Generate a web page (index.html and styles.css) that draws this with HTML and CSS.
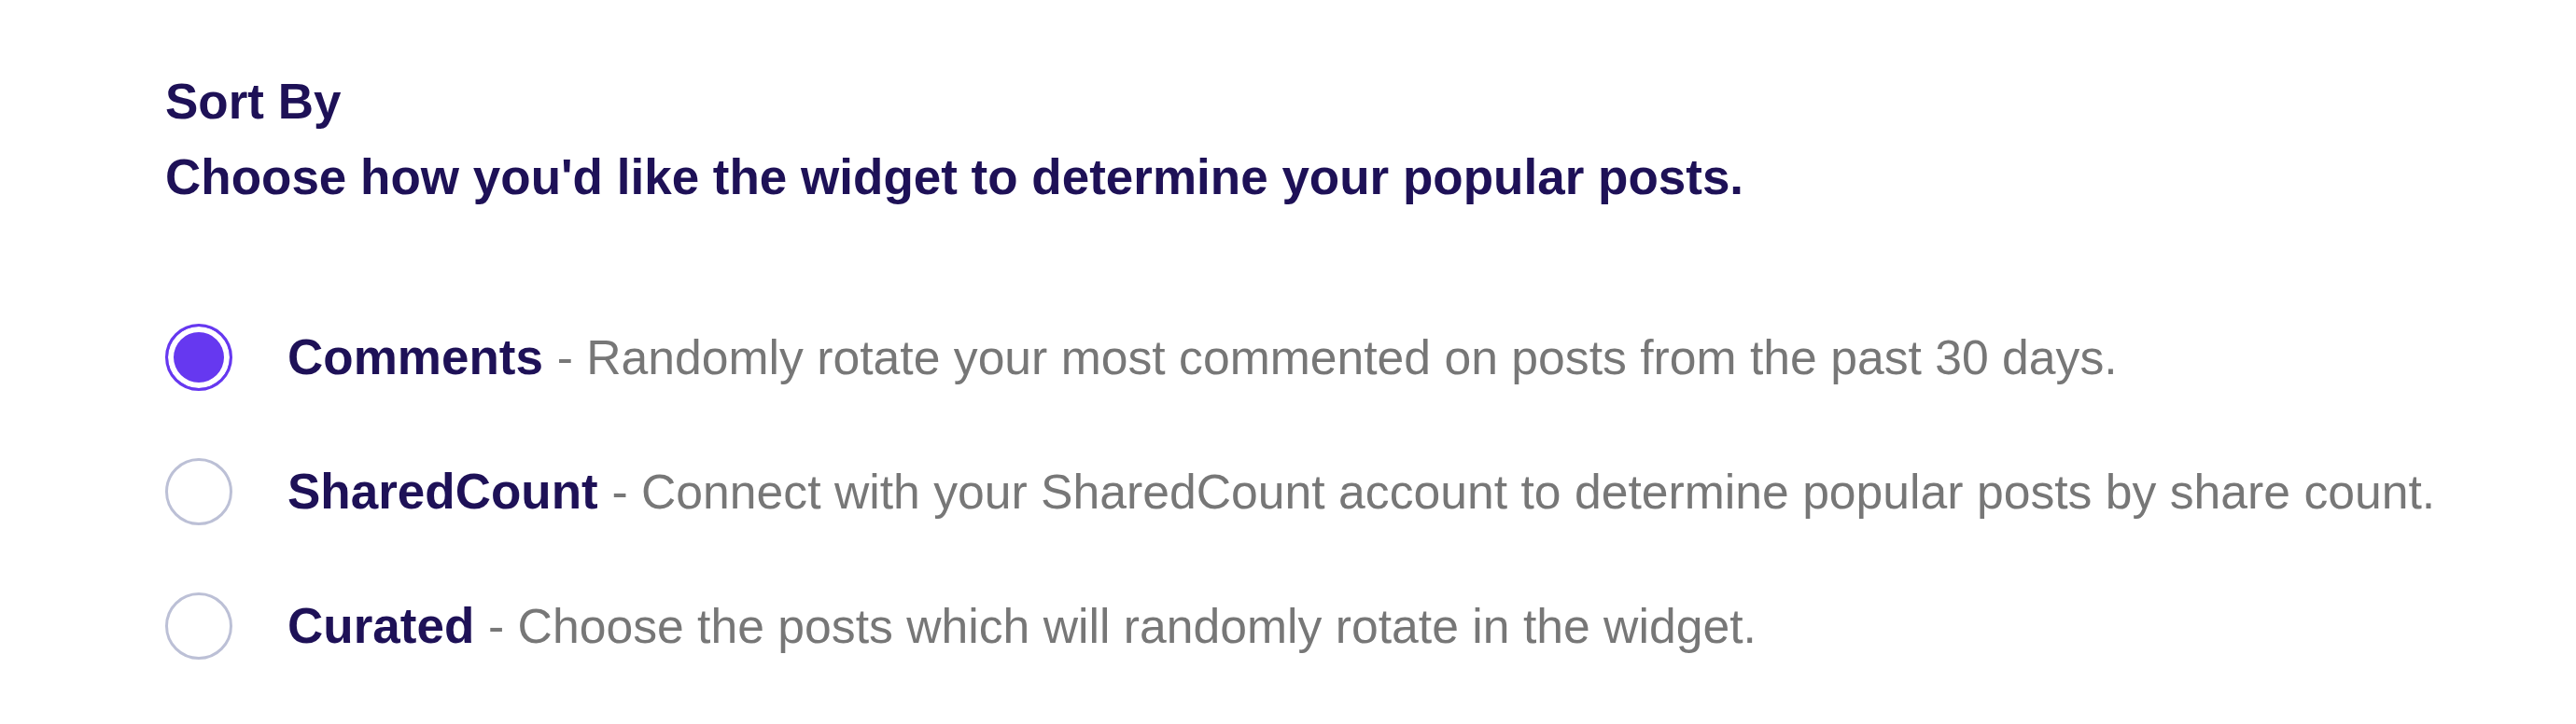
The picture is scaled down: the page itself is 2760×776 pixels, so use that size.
FILE: index.html
```html
<!DOCTYPE html>
<html lang="en">
<head>
<meta charset="UTF-8">
<meta name="viewport" content="width=device-width, initial-scale=1.0">
<title>Sort By</title>
<link rel="stylesheet" href="styles.css">
</head>
<body>
  <div class="settings">
    <h2 class="settings-title">Sort By</h2>
    <p class="settings-help">Choose how you'd like the widget to determine your popular posts.</p>

    <div class="options">
      <label class="option">
        <input type="radio" name="sort" value="comments" checked>
        <span class="option-text"><strong>Comments</strong> <span class="option-desc">- Randomly rotate your most commented on posts from the past 30 days.</span></span>
      </label>
      <label class="option">
        <input type="radio" name="sort" value="sharedcount">
        <span class="option-text"><strong>SharedCount</strong> <span class="option-desc">- Connect with your SharedCount account to determine popular posts by share count.</span></span>
      </label>
      <label class="option">
        <input type="radio" name="sort" value="curated">
        <span class="option-text"><strong>Curated</strong> <span class="option-desc">- Choose the posts which will randomly rotate in the widget.</span></span>
      </label>
    </div>
  </div>
</body>
</html>
```

FILE: styles.css
```css
body {
  margin: 0;
  padding: 0;
  background-color: #fff;
  font-family: "Liberation Sans", Arial, sans-serif;
  color: #1e1157;
}
.settings {
  padding: 68px 0 0 177px;
}
.settings-title {
  margin: 0;
  font-size: 53px;
  line-height: 81px;
  font-weight: bold;
}
.settings-help {
  margin: 0;
  font-size: 53px;
  line-height: 81px;
  font-weight: bold;
}
.options {
  display: flex;
  flex-direction: column;
  gap: 72px;
  margin-top: 117px;
}
.option {
  display: flex;
  align-items: center;
  gap: 59px;
  cursor: pointer;
}
.option input[type="radio"] {
  appearance: none;
  -webkit-appearance: none;
  margin: 0;
  width: 72px;
  height: 72px;
  flex-shrink: 0;
  border: 3px solid #bcc0d6;
  border-radius: 50%;
  background-color: #fff;
  cursor: pointer;
}
.option input[type="radio"]:checked {
  border-color: #6638f0;
  background-color: #6638f0;
  box-shadow: inset 0 0 0 6px #fff;
}
.option-text {
  font-size: 53px;
  line-height: 72px;
  color: #777;
}
.option-text strong {
  color: #1e1157;
}
.option-desc {
  font-size: 51.7px;
}
```
